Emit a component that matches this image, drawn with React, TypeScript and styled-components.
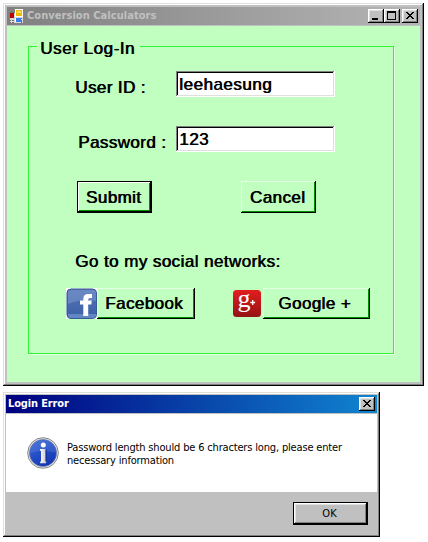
import React from "react";
import styled, { createGlobalStyle } from "styled-components";

const GlobalStyle = createGlobalStyle`
  * { box-sizing: border-box; }
  body { margin: 0; background: #fff; }
`;

const uiFont = `"DejaVu Sans Condensed", "DejaVu Sans", sans-serif`;
const formFont = `"Liberation Sans", Arial, sans-serif`;

const Desktop = styled.main`
  width: 428px;
  height: 542px;
  padding: 3px 0 0 3px;
  display: flex;
  flex-direction: column;
  align-items: flex-start;
  gap: 6px;
  overflow: hidden;
`;

const Frame = styled.section<{ $width: number; $height: number; $thick?: boolean }>`
  width: ${(p) => p.$width}px;
  height: ${(p) => p.$height}px;
  padding: ${(p) => (p.$thick ? "4px" : "3px")};
  display: flex;
  flex-direction: column;
  background: #c0c0c0;
  box-shadow: inset -1px -1px #000, inset 1px 1px #dfdfdf, inset -2px -2px #808080, inset 2px 2px #fff;
`;

const TitleBar = styled.header<{ $active?: boolean }>`
  height: 18px;
  flex: none;
  margin-bottom: 1px;
  padding: 0 2px 0 ${(p) => (p.$active ? 2 : 3)}px;
  display: flex;
  align-items: center;
  color: ${(p) => (p.$active ? "#fff" : "#c0c0c0")};
  background: ${(p) =>
    p.$active ? "linear-gradient(90deg, #000080, #1084d0)" : "linear-gradient(90deg, #808080, #b5b5b5)"};
`;

const Title = styled.h1<{ $spacing: number }>`
  margin: 0;
  flex: 1;
  white-space: nowrap;
  font: bold 11px/18px ${uiFont};
  letter-spacing: ${(p) => p.$spacing}px;
`;

const AppIcon = styled.svg`
  width: 14px;
  height: 14px;
  margin-right: 3px;
  flex: none;
`;

const CaptionButton = styled.button<{ $gap?: boolean }>`
  width: 16px;
  height: 14px;
  padding: 0;
  border: 0;
  display: flex;
  margin-left: ${(p) => (p.$gap ? 2 : 0)}px;
  background: #c0c0c0;
  box-shadow: inset -1px -1px #000, inset 1px 1px #fff, inset -2px -2px #808080, inset 2px 2px #dfdfdf;
`;

const FormBody = styled.div`
  flex: 1;
  background: #c0ffc0;
  padding: 10px 25px 27px 21px;
  color: #000;
  font: 17px/20px ${formFont};
  letter-spacing: 0.4px;
  text-shadow: 0.7px 0 #000;
`;

const Group = styled.fieldset`
  width: 366px;
  height: 318px;
  margin: 0;
  min-width: 0;
  padding: 0;
  border: 1px solid #32f532;
  box-shadow: 1px 1px #e6ffe6;
`;

const Legend = styled.legend`
  height: 20px;
  margin-left: 8px;
  padding: 3px 0 0 3px;
  width: 103px;
  white-space: nowrap;
  letter-spacing: 0.55px;
  line-height: 19px;
`;

const Field = styled.label<{ $top: number; $left: number }>`
  display: flex;
  margin-top: ${(p) => p.$top}px;
  margin-left: ${(p) => p.$left}px;
`;

const Caption = styled.span<{ $width: number }>`
  width: ${(p) => p.$width}px;
  padding-top: 7px;
  margin-bottom: -1px;
  white-space: pre;
`;

const TextBox = styled.input`
  width: 159px;
  height: 26px;
  padding: 2px 2px 0 3px;
  border: 0;
  outline: 0;
  color: inherit;
  background: #fff;
  font: inherit;
  letter-spacing: 0.5px;
  text-shadow: inherit;
  box-shadow: inset -1px -1px #fff, inset 1px 1px #808080, inset -2px -2px #dfdfdf, inset 2px 2px #000;
`;

const Actions = styled.div`
  display: flex;
  gap: 89px;
  margin: 29px 0 0 48px;
`;

const FormButton = styled.button<{ $width: number; $height: number; $primary?: boolean }>`
  width: ${(p) => p.$width}px;
  height: ${(p) => p.$height}px;
  padding: 1px 2px 0 0;
  border: ${(p) => (p.$primary ? "1px solid #000" : "0")};
  color: inherit;
  background: #c0ffc0;
  font: inherit;
  letter-spacing: inherit;
  text-shadow: inherit;
  white-space: nowrap;
  box-shadow: inset -1px -1px #000, inset 1px 1px ${(p) => (p.$primary ? "#fff" : "#e5ffe5")}, inset -2px -2px #009000;
`;

const SocialHeading = styled.p`
  margin: 39px 0 0 46px;
  letter-spacing: 0.43px;
`;

const SocialRow = styled.div`
  margin: 16px 0 0 37px;
  display: flex;
  align-items: center;

  ${FormButton} {
    padding-right: 4px;
  }
`;

const FacebookLogo = styled.svg`
  width: 31px;
  height: 31px;
`;

const GoogleLogo = styled.svg`
  width: 28px;
  height: 27px;
  margin: 0 2px 0 38px;
  overflow: visible;
  text-shadow: none;
  letter-spacing: 0;
`;

const MessageArea = styled.div`
  height: 78px;
  background: #fff;
  display: flex;
  padding: 23px 0 0 21px;
  gap: 8px;
`;

const InfoIcon = styled.svg`
  width: 32px;
  height: 32px;
`;

const Message = styled.p`
  margin: 4px 0 0;
  color: #000;
  font: 11px/13px ${uiFont};
  letter-spacing: -0.165px;
  white-space: pre;
`;

const DialogFooter = styled.footer`
  display: flex;
  justify-content: flex-end;
  padding: 10px 9px 0 0;
`;

const OkButton = styled.button`
  width: 75px;
  height: 23px;
  padding: 0 2px 0 0;
  border: 1px solid #000;
  color: #000;
  background: #c0c0c0;
  font: 11px ${uiFont};
  box-shadow: inset -1px -1px #000, inset 1px 1px #fff, inset -2px -2px #808080, inset 2px 2px #dfdfdf;
`;

const CloseGlyph = () => (
  <svg width="16" height="14" shapeRendering="crispEdges">
    <path d="M4 3h2v1h1v1h2v-1h1v-1h2v1h-1v1h-1v1h-1v1h1v1h1v1h1v1h-2v-1h-1v-1h-2v1h-1v1h-2v-1h1v-1h1v-1h1v-1h-1v-1h-1v-1h-1z" />
  </svg>
);

const MinimizeGlyph = () => (
  <svg width="16" height="14" shapeRendering="crispEdges">
    <path d="M4 9h6v2H4z" />
  </svg>
);

const MaximizeGlyph = () => (
  <svg width="16" height="14" shapeRendering="crispEdges">
    <path fillRule="evenodd" d="M3 2h9v9H3zM4 4v6h7V4z" />
  </svg>
);

const FormIcon = () => (
  <AppIcon viewBox="0 0 14 14" shapeRendering="crispEdges">
    <path fill="#d8d8d8" d="M0 3h5v11H0zM5 8h8v6H5z" />
    <path fill="#707070" d="M0 3h5v1H0zM0 11h1v1H0zM2 11h2v1H2zM0 13h1v1H0zM2 13h2v1H2zM11 9h1v1h-1zM11 11h1v3h-1z" />
    <path fill="#fff" d="M5 0h8v8H5zM5 9h6v4H5z" />
    <path fill="#b80000" d="M0 4h4v5H0z" />
    <path fill="#f2b900" d="M6 1h6v6H6z" />
    <path fill="#ffdf68" d="M7 2h4v2H7z" />
    <path fill="#397ee8" d="M6 9h5v4H6z" />
  </AppIcon>
);

const FacebookIcon = () => (
  <FacebookLogo viewBox="0 0 31 31">
    <defs>
      <linearGradient id="fb" x2="0" y2="1">
        <stop stopColor="#5575b5" />
        <stop offset="1" stopColor="#3c60a7" />
      </linearGradient>
    </defs>
    <path fill="#fff" d="M0 0h31v31H0z" />
    <rect x="1" y="1" width="29.5" height="29.5" rx="4" fill="url(#fb)" stroke="#365895" />
    <path fill="#809bcf" opacity=".5" d="M2 4q0-2 3-2h22q3 0 3 3v8Q17 10 2 16z" />
    <path fill="#6387c5" d="M2 26h28v2q-1 2-3 2H5q-3 0-3-3z" />
    <path fill="#fff" d="M17.3 28V16.5H14v-4h3.3V11q0-5 5-5H26v4h-2.2q-1.6 0-1.6 1.5v1h3.6l-.5 4h-3.1V28z" />
  </FacebookLogo>
);

const GoogleIcon = () => (
  <GoogleLogo viewBox="0 0 28 27">
    <defs>
      <linearGradient id="gp" x2="0" y2="1">
        <stop stopColor="#e21d1d" />
        <stop offset="1" stopColor="#941414" />
      </linearGradient>
    </defs>
    <rect width="28" height="27" rx="3.5" fill="url(#gp)" />
    <text x="4.6" y="16.6" fill="#fff" fontFamily="Liberation Serif, serif" fontSize="26">g</text>
    <path fill="none" stroke="#fff" strokeWidth="1.3" d="M17.3 12.5h4.8M19.7 10v5" />
  </GoogleLogo>
);

const InformationIcon = () => (
  <InfoIcon viewBox="0 0 32 32">
    <defs>
      <linearGradient id="info" x2="0.6" y2="1">
        <stop stopColor="#456ed8" />
        <stop offset=".5" stopColor="#2550c8" />
        <stop offset="1" stopColor="#1636b4" />
      </linearGradient>
      <linearGradient id="stem">
        <stop stopColor="#fff" />
        <stop offset="1" stopColor="#c7c7d0" />
      </linearGradient>
    </defs>
    <circle cx="16" cy="16" r="15.3" fill="#e7e7e7" stroke="#858585" />
    <circle cx="16" cy="16" r="13.6" fill="url(#info)" stroke="#6c7fae" strokeWidth=".7" />
    <path fill="#7794e4" opacity=".25" d="M3 16a13 13 0 0 1 26 0Q17 12 3 16" />
    <path fill="#102d91" opacity=".65" d="M17 26h3V12l-2 1z" />
    <circle cx="16.3" cy="7.9" r="2.5" fill="#fff" />
    <path fill="url(#stem)" d="M13 12h5.4v12.5h.8v1.8h-6v-1.8h.8V13.7h-1z" />
  </InfoIcon>
);

export default function App() {
  return (
    <>
      <GlobalStyle />
      <Desktop>
        <Frame $width={421} $height={383} $thick>
          <TitleBar>
            <FormIcon />
            <Title $spacing={0.05}>Conversion Calculators</Title>
            <CaptionButton aria-label="Minimize"><MinimizeGlyph /></CaptionButton>
            <CaptionButton aria-label="Maximize"><MaximizeGlyph /></CaptionButton>
            <CaptionButton aria-label="Close" $gap><CloseGlyph /></CaptionButton>
          </TitleBar>
          <FormBody>
            <Group>
              <Legend>User Log-In</Legend>
              <Field $top={15} $left={46}>
                <Caption $width={101}>User ID :</Caption>
                <TextBox defaultValue="leehaesung" />
              </Field>
              <Field $top={29} $left={49}>
                <Caption $width={98}>Password :</Caption>
                <TextBox defaultValue="123" />
              </Field>
              <Actions>
                <FormButton $width={75} $height={32} $primary>Submit</FormButton>
                <FormButton $width={75} $height={32}>Cancel</FormButton>
              </Actions>
              <SocialHeading>Go to my social networks:</SocialHeading>
              <SocialRow>
                <FacebookIcon />
                <FormButton $width={98} $height={31}>Facebook</FormButton>
                <GoogleIcon />
                <FormButton $width={107} $height={31}>Google +</FormButton>
              </SocialRow>
            </Group>
          </FormBody>
        </Frame>
        <Frame $width={377} $height={145}>
          <TitleBar $active>
            <Title $spacing={-0.15}>Login Error</Title>
            <CaptionButton aria-label="Close"><CloseGlyph /></CaptionButton>
          </TitleBar>
          <MessageArea>
            <InformationIcon />
            <Message>{"Password length should be 6 chracters long, please enter\nnecessary information"}</Message>
          </MessageArea>
          <DialogFooter>
            <OkButton>OK</OkButton>
          </DialogFooter>
        </Frame>
      </Desktop>
    </>
  );
}
